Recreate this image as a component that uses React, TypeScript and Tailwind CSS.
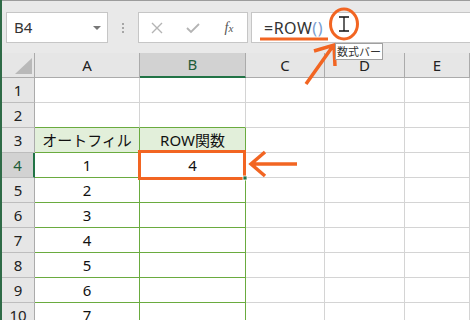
const ORANGE = "#f26522";

const COLS = ["A", "B", "C", "D", "E"];
const COL_W = ["w-[105px]", "w-[106px]", "w-[79px]", "w-[80px]", "w-[65px]"];

const cellData: Record<string, string> = {
  "3-0": "オートフィル",
  "3-1": "ROW関数",
  "4-0": "1",
  "4-1": "4",
  "5-0": "2",
  "6-0": "3",
  "7-0": "4",
  "8-0": "5",
  "9-0": "6",
  "10-0": "7",
};

function cellClass(row: number, col: number) {
  const inTable = row >= 3 && col <= 1;
  if (row === 3 && inTable) return "border-r border-b border-[#6aab3f] bg-[#e2efda]";
  if (inTable) return "border-r border-b border-[#6aab3f] bg-white";
  if (row === 2 && col <= 1) return "border-b border-b-[#6aab3f] border-r border-r-[#d4d4d4]";
  return "border-r border-b border-[#d4d4d4]";
}

function Toolbar() {
  return (
    <div className="h-[53px] border-t border-[#9c9c9c] bg-[#e9e9e9] flex items-start pt-[11px] pl-[4px]">
      {/* name box */}
      <div className="shrink-0 w-[102px] h-[31px] border border-[#c6c6c6] bg-white flex items-center justify-between pl-[7px] pr-[6px]">
        <span className="text-[15px] text-[#333] font-['Noto_Sans',sans-serif] leading-none">B4</span>
        <span className="w-0 h-0 border-l-[4px] border-r-[4px] border-t-[4px] border-l-transparent border-r-transparent border-t-[#777]" />
      </div>
      {/* grip */}
      <div className="shrink-0 w-[30px] h-[31px] flex flex-col items-center justify-center gap-[2px]">
        <span className="w-[2px] h-[2px] bg-[#a6a6a6]" />
        <span className="w-[2px] h-[2px] bg-[#a6a6a6]" />
        <span className="w-[2px] h-[2px] bg-[#a6a6a6]" />
      </div>
      {/* cancel / enter / fx */}
      <div className="shrink-0 w-[110px] h-[31px] border border-[#c6c6c6] bg-white flex items-center">
        <span className="w-[36px] flex justify-center">
          <svg width="12" height="12" viewBox="0 0 12 12">
            <path d="M1 1 L11 11 M11 1 L1 11" stroke="#b4b4b4" strokeWidth="1.4" />
          </svg>
        </span>
        <span className="w-[36px] flex justify-center">
          <svg width="14" height="12" viewBox="0 0 14 12">
            <path d="M1 6 L5 10 L13 2" stroke="#b4b4b4" strokeWidth="1.8" fill="none" />
          </svg>
        </span>
        <span className="w-[36px] flex justify-center items-baseline italic text-[#555] font-['Liberation_Serif',serif] leading-none">
          <span className="text-[14px]">f</span>
          <span className="text-[11px]">x</span>
        </span>
      </div>
      {/* formula */}
      <div className="shrink-0 ml-[3px] w-[240px] h-[31px] border border-[#c6c6c6] bg-white flex items-center pl-[12px]">
        <span className="text-[16px] text-[#333] font-['Noto_Sans',sans-serif] leading-none tracking-[0.5px]">
          =ROW<span className="text-[#7a9cd0]">()</span>
        </span>
      </div>
    </div>
  );
}

function HeaderRow() {
  return (
    <div className="flex h-[25px] bg-[#e6e6e6]">
      <div className="shrink-0 w-[33px] h-full border-r border-b border-[#ababab] flex items-end justify-end pr-[2px] pb-[3px]">
        <svg width="17" height="16" viewBox="0 0 17 16">
          <path d="M17 0 L17 16 L0 16 Z" fill="#b9b9b9" />
        </svg>
      </div>
      {COLS.map((c, i) => (
        <div
          key={c}
          className={`shrink-0 ${COL_W[i]} h-full flex items-center justify-center text-[15px] font-['Noto_Sans',sans-serif] ${
            i === 1
              ? "bg-[#d2d2d2] border-r border-r-[#ababab] border-b-2 border-b-[#217346] text-[#1f5d3a]"
              : "border-r border-b border-[#ababab] text-[#222]"
          }`}
        >
          {c}
        </div>
      ))}
    </div>
  );
}

function Row({ n }: { n: number }) {
  const sel = n === 4;
  return (
    <div className="flex h-[25px]">
      <div
        className={`shrink-0 w-[33px] h-full flex items-center justify-center text-[15px] font-['Noto_Sans',sans-serif] border-b border-b-[#bdbdbd] ${
          sel ? "bg-[#d2d2d2] border-r-2 border-r-[#217346] text-[#1f5d3a]" : "bg-[#e6e6e6] border-r border-r-[#ababab] text-[#222]"
        }`}
      >
        {n}
      </div>
      {COLS.map((c, i) => (
        <div
          key={c}
          className={`shrink-0 ${COL_W[i]} h-full flex items-center justify-center text-[15px] text-[#111] font-['Noto_Sans','Noto_Sans_CJK_JP',sans-serif] ${cellClass(n, i)}`}
        >
          {cellData[`${n}-${i}`] ?? ""}
        </div>
      ))}
    </div>
  );
}

export default function App() {
  return (
    <div className="relative w-[470px] h-[320px] overflow-hidden bg-white">
      <div className="h-full border-l-2 border-[#2f6b47]">
        <Toolbar />
        <HeaderRow />
        {Array.from({ length: 10 }, (_, i) => (
          <Row key={i} n={i + 1} />
        ))}
      </div>

      {/* annotations */}
      <svg className="absolute inset-0 pointer-events-none" width="470" height="320" viewBox="0 0 470 320">
        <rect x="139.5" y="151.5" width="105" height="27" fill="none" stroke={ORANGE} strokeWidth="3" />
        <rect x="243" y="176" width="4" height="4" fill="#217346" stroke="#fff" strokeWidth="0.8" />
        <line x1="260" y1="39" x2="328" y2="39" stroke={ORANGE} strokeWidth="3" />
        <ellipse cx="344" cy="24" rx="13.5" ry="15" fill="none" stroke={ORANGE} strokeWidth="3" />
        {/* I-beam */}
        <path d="M339 17 H349 M344 17 V31 M339 31 H349" stroke="#111" strokeWidth="1.3" fill="none" />
        {/* up-right arrow */}
        <path d="M306 84 L333 46 M314 51 L334 45 L335 66" stroke={ORANGE} strokeWidth="3.5" fill="none" strokeLinecap="butt" />
        {/* left arrow */}
        <path d="M252 164 H297 M265 152 L251 164 L265 176" stroke={ORANGE} strokeWidth="3.5" fill="none" />
      </svg>

      <div className="absolute left-[335px] top-[43px] w-[48px] h-[17px] bg-white border border-[#a0a0a0] flex items-center justify-center text-[11px] text-[#333] font-['Noto_Sans_CJK_JP',sans-serif] leading-none">
        数式バー
      </div>
    </div>
  );
}
